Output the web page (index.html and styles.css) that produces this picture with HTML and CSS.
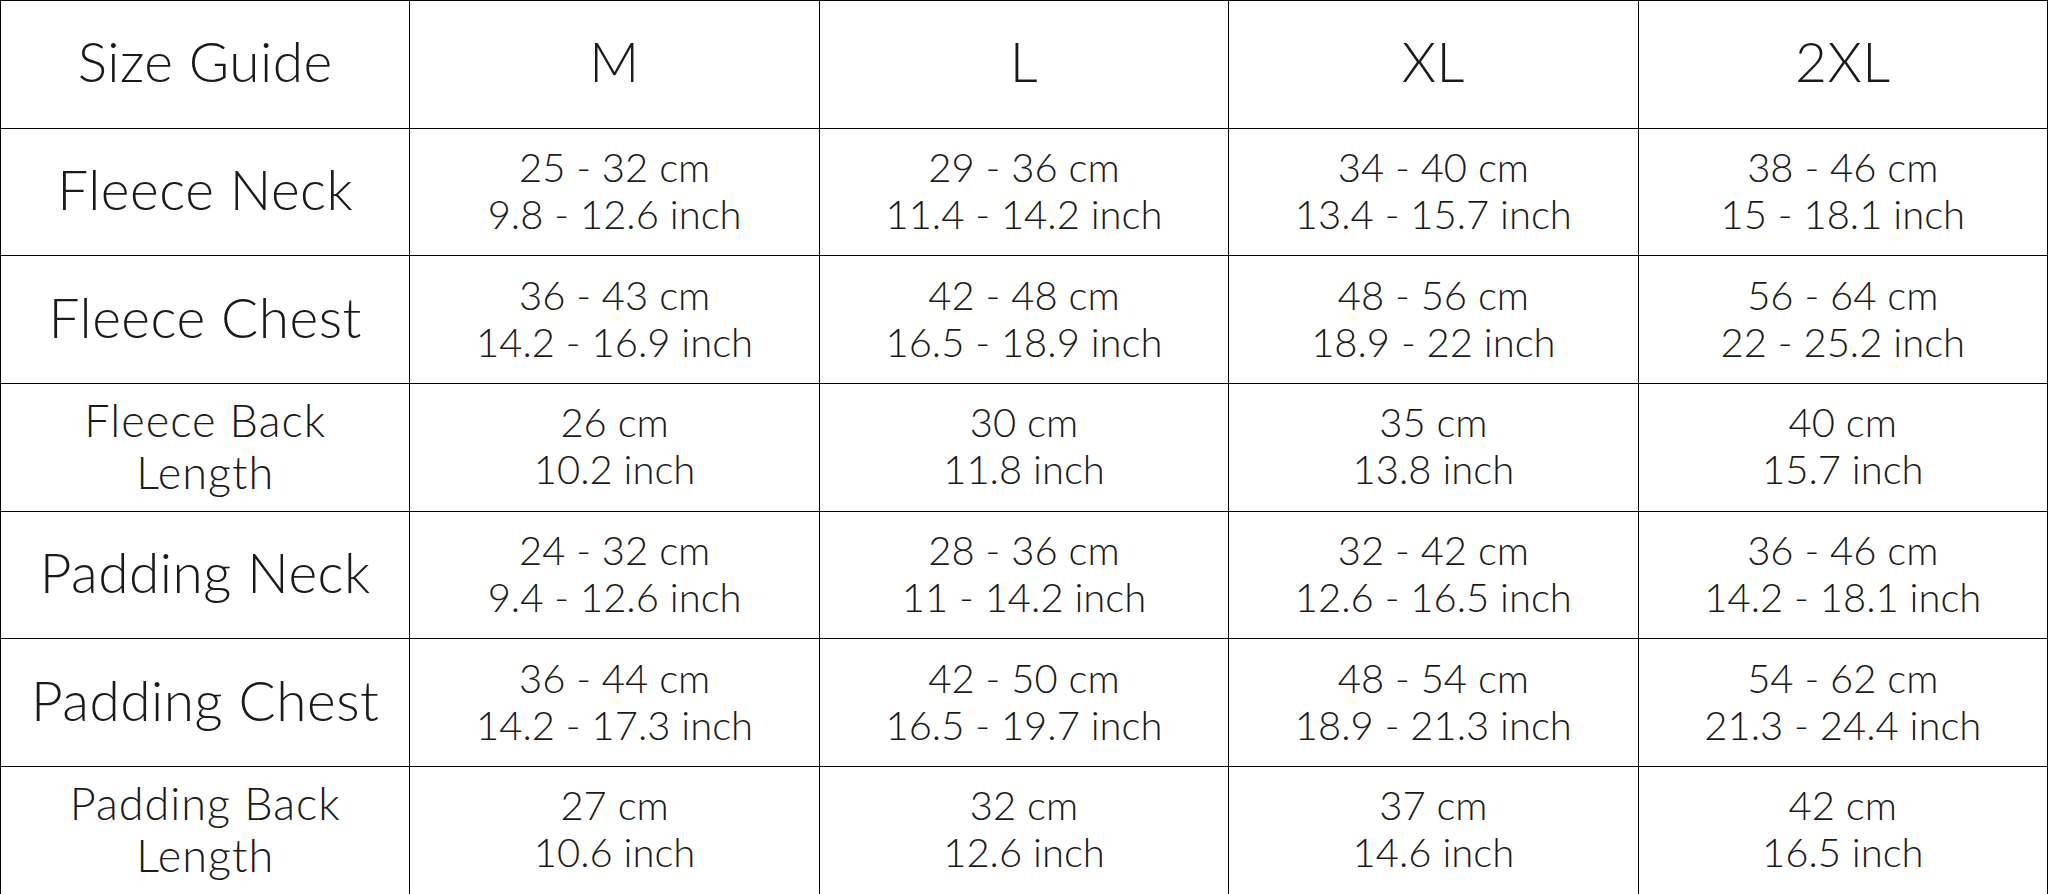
FILE: index.html
```html
<!DOCTYPE html>
<html>
<head>
<meta charset="utf-8">
<link rel="stylesheet" href="styles.css">
</head>
<body>
<table class="size-table">
  <colgroup>
    <col class="c"><col class="c"><col class="c"><col class="c"><col class="c">
  </colgroup>
  <tr class="head">
    <th class="label">Size Guide</th>
    <th>M</th>
    <th>L</th>
    <th>XL</th>
    <th>2XL</th>
  </tr>
  <tr>
    <th class="label">Fleece Neck</th>
    <td>25 - 32 cm<br>9.8 - 12.6 inch</td>
    <td>29 - 36 cm<br>11.4 - 14.2 inch</td>
    <td>34 - 40 cm<br>13.4 - 15.7 inch</td>
    <td>38 - 46 cm<br>15 - 18.1 inch</td>
  </tr>
  <tr>
    <th class="label">Fleece Chest</th>
    <td>36 - 43 cm<br>14.2 - 16.9 inch</td>
    <td>42 - 48 cm<br>16.5 - 18.9 inch</td>
    <td>48 - 56 cm<br>18.9 - 22 inch</td>
    <td>56 - 64 cm<br>22 - 25.2 inch</td>
  </tr>
  <tr>
    <th class="label small">Fleece Back<br>Length</th>
    <td>26 cm<br>10.2 inch</td>
    <td>30 cm<br>11.8 inch</td>
    <td>35 cm<br>13.8 inch</td>
    <td>40 cm<br>15.7 inch</td>
  </tr>
  <tr>
    <th class="label">Padding Neck</th>
    <td>24 - 32 cm<br>9.4 - 12.6 inch</td>
    <td>28 - 36 cm<br>11 - 14.2 inch</td>
    <td>32 - 42 cm<br>12.6 - 16.5 inch</td>
    <td>36 - 46 cm<br>14.2 - 18.1 inch</td>
  </tr>
  <tr>
    <th class="label">Padding Chest</th>
    <td>36 - 44 cm<br>14.2 - 17.3 inch</td>
    <td>42 - 50 cm<br>16.5 - 19.7 inch</td>
    <td>48 - 54 cm<br>18.9 - 21.3 inch</td>
    <td>54 - 62 cm<br>21.3 - 24.4 inch</td>
  </tr>
  <tr>
    <th class="label small">Padding Back<br>Length</th>
    <td>27 cm<br>10.6 inch</td>
    <td>32 cm<br>12.6 inch</td>
    <td>37 cm<br>14.6 inch</td>
    <td>42 cm<br>16.5 inch</td>
  </tr>
</table>
</body>
</html>
```
FILE: styles.css
```css
html, body {
  margin: 0;
  padding: 0;
  background: #ffffff;
}
body {
  font-family: "Lato", "Liberation Sans", sans-serif;
  font-weight: 300;
  color: #1a1a1a;
}
.size-table {
  width: 2048px;
  height: 894px;
  border-collapse: collapse;
  table-layout: fixed;
}
.size-table col.c {
  width: 20%;
}
.size-table tr {
  height: 127.7px;
}
.size-table th,
.size-table td {
  border: 1px solid #000;
  text-align: center;
  vertical-align: middle;
  padding: 0;
  font-weight: 300;
}
.size-table td {
  font-size: 40px;
  line-height: 47px;
  letter-spacing: 0;
  padding-bottom: 2px;
}
.size-table th {
  font-size: 55px;
  line-height: 60px;
  letter-spacing: 0.5px;
  padding-bottom: 6px;
}
.size-table th.small {
  font-size: 45px;
  line-height: 52px;
  letter-spacing: 1px;
  padding-bottom: 2px;
}
```
